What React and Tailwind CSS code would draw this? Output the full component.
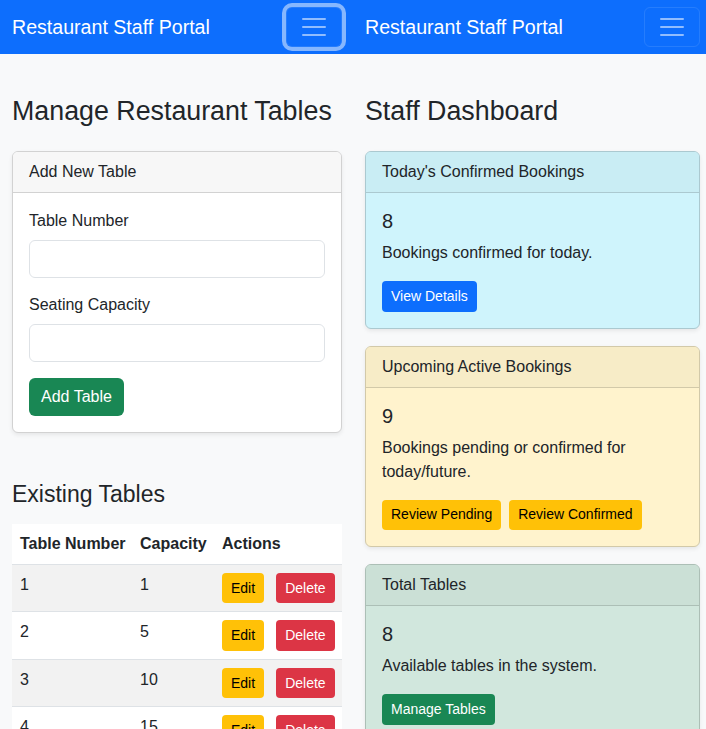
import React from 'react';

function Toggler({ focused }) {
  return (
    <button
      type="button"
      className={
        'flex h-[40px] w-[56px] items-center justify-center rounded-md border border-white/10 ' +
        (focused ? 'ring-4 ring-white/50' : '')
      }
    >
      <svg width="30" height="30" viewBox="0 0 30 30">
        <path
          stroke="rgba(255,255,255,0.55)"
          strokeLinecap="round"
          strokeMiterlimit="10"
          strokeWidth="2"
          d="M4 7h22M4 15h22M4 23h22"
        />
      </svg>
    </button>
  );
}

function Navbar({ focused, padRight }) {
  return (
    <nav className={'flex h-[54px] items-center justify-between bg-[#0d6efd] pl-3 ' + padRight}>
      <span className="text-[19.6px] leading-[30px] text-white">Restaurant Staff Portal</span>
      <Toggler focused={focused} />
    </nav>
  );
}

const tables = [
  { num: 1, cap: 1 },
  { num: 2, cap: 5 },
  { num: 3, cap: 10 },
  { num: 4, cap: 15 },
  { num: 5, cap: 20 },
];

function Field({ label, className }) {
  return (
    <div className={className}>
      <label className="mb-[7px] block leading-6">{label}</label>
      <input
        type="text"
        className="block h-[38px] w-full rounded-md border border-[#dee2e6] bg-white px-3 outline-none"
      />
    </div>
  );
}

function StatCard({ title, count, text, bg, header, border, children }) {
  return (
    <div className={'mb-[17px] overflow-hidden rounded-md border shadow-[0_2px_4px_rgba(0,0,0,0.075)] ' + bg + ' ' + border}>
      <div className={'border-b px-4 py-2 leading-6 ' + header + ' ' + border}>{title}</div>
      <div className="p-4">
        <h5 className="mb-2 text-[20px] leading-6">{count}</h5>
        <p className="mb-4 leading-6">{text}</p>
        <div className="flex gap-2">{children}</div>
      </div>
    </div>
  );
}

function SmallBtn({ className, children }) {
  return (
    <button
      type="button"
      className={'h-[30.5px] whitespace-nowrap rounded border border-transparent px-2 text-[14px] leading-[21px] ' + className}
    >
      {children}
    </button>
  );
}

export default function App() {
  return (
    <div className="flex h-[729px] w-[706px] overflow-hidden bg-[#f8f9fa] font-['Liberation_Sans',Arial,sans-serif] text-base leading-6 text-[#212529]">
      {/* left: manage tables */}
      <div className="w-[353px] shrink-0">
        <Navbar focused padRight="pr-[11px]" />
        <div className="pl-3 pr-[11px] pt-[41px]">
          <h1 className="mb-6 text-[26.8px] leading-[1.2]">Manage Restaurant Tables</h1>

          <div className="overflow-hidden rounded-md border border-[#d2d2d2] bg-white shadow-[0_2px_4px_rgba(0,0,0,0.075)]">
            <div className="border-b border-[#d2d2d2] bg-[#f7f7f7] px-4 py-2 leading-6">Add New Table</div>
            <div className="p-4">
              <Field label="Table Number" className="mb-[15px]" />
              <Field label="Seating Capacity" className="mb-4" />
              <button
                type="button"
                className="h-[38px] rounded-md border border-transparent bg-[#198754] px-[11px] leading-6 text-white"
              >
                Add Table
              </button>
            </div>
          </div>

          <h3 className="mb-[15px] mt-[48px] text-[23px] leading-[1.2]">Existing Tables</h3>

          <table className="w-full table-fixed bg-white">
            <thead>
              <tr>
                <th className="w-[120px] whitespace-nowrap border-b border-[#dee2e6] px-2 py-2 text-left font-bold">Table Number</th>
                <th className="w-[82px] whitespace-nowrap border-b border-[#dee2e6] px-2 py-2 text-left font-bold">Capacity</th>
                <th className="whitespace-nowrap border-b border-[#dee2e6] px-2 py-2 text-left font-bold">Actions</th>
              </tr>
            </thead>
            <tbody>
              {tables.map((t, i) => (
                <tr key={t.num} className={i % 2 === 0 ? 'bg-[#f2f2f2]' : 'bg-white'}>
                  <td className="border-b border-[#dee2e6] px-2 py-2 align-top">{t.num}</td>
                  <td className="border-b border-[#dee2e6] px-2 py-2 align-top">{t.cap}</td>
                  <td className="border-b border-[#dee2e6] px-2 py-2 align-top">
                    <div className="flex gap-3">
                      <SmallBtn className="bg-[#ffc107] text-black">Edit</SmallBtn>
                      <SmallBtn className="bg-[#dc3545] text-white">Delete</SmallBtn>
                    </div>
                  </td>
                </tr>
              ))}
            </tbody>
          </table>
        </div>
      </div>

      {/* right: dashboard */}
      <div className="w-[353px] shrink-0">
        <Navbar padRight="pr-[6px]" />
        <div className="pl-3 pr-[6px] pt-[41px]">
          <h1 className="mb-6 text-[26.8px] leading-[1.2]">Staff Dashboard</h1>

          <StatCard
            title="Today's Confirmed Bookings"
            count="8"
            text="Bookings confirmed for today."
            bg="bg-[#cff4fc]"
            header="bg-[#c9edf4]"
            border="border-[#abc9d0]"
          >
            <SmallBtn className="bg-[#0d6efd] text-white">View Details</SmallBtn>
          </StatCard>

          <StatCard
            title="Upcoming Active Bookings"
            count="9"
            text={
              <>
                Bookings pending or confirmed for <span className="whitespace-nowrap">today/future.</span>
              </>
            }
            bg="bg-[#fff3cd]"
            header="bg-[#f7ecc7]"
            border="border-[#d2c9a9]"
          >
            <SmallBtn className="bg-[#ffc107] text-black">Review Pending</SmallBtn>
            <SmallBtn className="bg-[#ffc107] text-black">Review Confirmed</SmallBtn>
          </StatCard>

          <StatCard
            title="Total Tables"
            count="8"
            text="Available tables in the system."
            bg="bg-[#d1e7dd]"
            header="bg-[#cbe0d6]"
            border="border-[#acbfb6]"
          >
            <SmallBtn className="bg-[#198754] text-white">Manage Tables</SmallBtn>
          </StatCard>
        </div>
      </div>
    </div>
  );
}
